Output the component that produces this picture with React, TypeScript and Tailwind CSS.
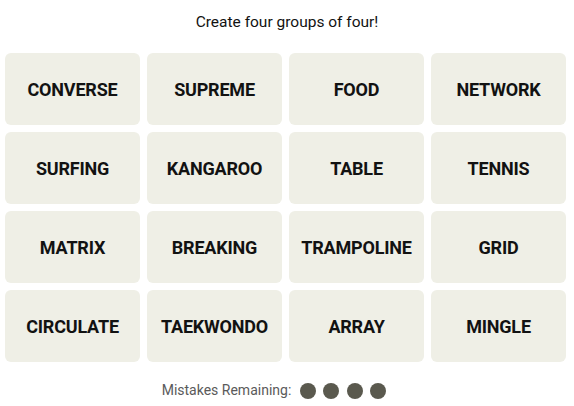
const words = [
  "CONVERSE", "SUPREME", "FOOD", "NETWORK",
  "SURFING", "KANGAROO", "TABLE", "TENNIS",
  "MATRIX", "BREAKING", "TRAMPOLINE", "GRID",
  "CIRCULATE", "TAEKWONDO", "ARRAY", "MINGLE",
];

export default function App() {
  return (
    <div className="w-[574px] h-[406px] bg-white font-['Roboto',sans-serif] text-[#121212]">
      <p className="pt-[12px] h-[53px] text-center text-[15.5px] leading-[21px]">
        Create four groups of four!
      </p>

      <div className="ml-[5px] grid grid-cols-[repeat(4,135px)] auto-rows-[72px] gap-[7px]">
        {words.map((w) => (
          <button
            key={w}
            className="rounded-[6px] bg-[#efefe6] text-[18px] font-bold uppercase tracking-[-0.2px]"
          >
            {w}
          </button>
        ))}
      </div>

      <div className="mt-[18px] flex items-center justify-center gap-[7.5px] pr-[26px] text-[14px] text-[#5a5a5a]">
        <span className="mr-[1px]">Mistakes Remaining:</span>
        {[0, 1, 2, 3].map((i) => (
          <span key={i} className="h-[16px] w-[16px] rounded-full bg-[#5a594e]" />
        ))}
      </div>
    </div>
  );
}
